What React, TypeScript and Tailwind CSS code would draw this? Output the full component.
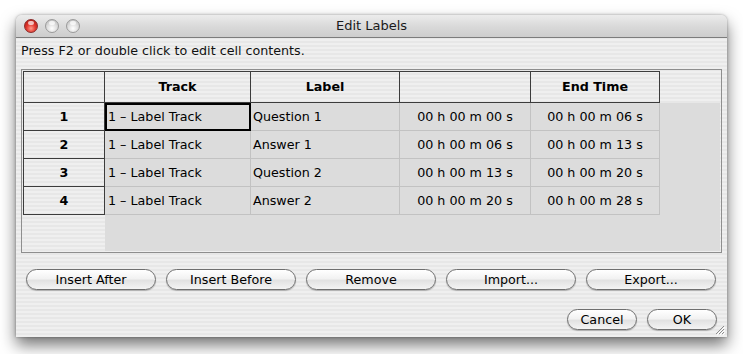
import React from 'react'

const rows = [
  { n: '1', track: '1 – Label Track', label: 'Question 1', start: '00 h 00 m 00 s', end: '00 h 00 m 06 s' },
  { n: '2', track: '1 – Label Track', label: 'Answer 1', start: '00 h 00 m 06 s', end: '00 h 00 m 13 s' },
  { n: '3', track: '1 – Label Track', label: 'Question 2', start: '00 h 00 m 13 s', end: '00 h 00 m 20 s' },
  { n: '4', track: '1 – Label Track', label: 'Answer 2', start: '00 h 00 m 20 s', end: '00 h 00 m 28 s' },
]

const stripes =
  'bg-[#ececec] bg-[image:repeating-linear-gradient(180deg,#efefef_0px,#efefef_2px,#e7e7e7_2px,#e7e7e7_4px)]'

function Light({ red }: { red?: boolean }) {
  return (
    <span
      className={
        red
          ? 'w-[14px] h-[14px] rounded-full border border-[#8a2a2a] bg-[radial-gradient(circle_at_50%_70%,#ff9a8a_0%,#e0352c_45%,#a3160f_100%)] relative'
          : 'w-[14px] h-[14px] rounded-full border border-[#9a9a9a] bg-[radial-gradient(circle_at_50%_70%,#ffffff_0%,#dcdcdc_50%,#b4b4b4_100%)] relative'
      }
    >
      <span className="absolute left-[3px] top-[1px] w-[6px] h-[4px] rounded-full bg-white/70" />
    </span>
  )
}

function AquaButton({ children, w }: { children: React.ReactNode; w: string }) {
  return (
    <button
      className={`${w} h-[21px] rounded-full border border-[#6f6f6f] bg-[linear-gradient(180deg,#ffffff_0%,#f2f2f2_45%,#e2e2e2_55%,#f4f4f4_100%)] shadow-[0_1px_1px_rgba(0,0,0,0.25)] text-[12.7px] leading-[19px] text-black text-center`}
    >
      {children}
    </button>
  )
}

export default function App() {
  return (
    <div className="w-[743px] h-[354px] bg-white pt-[15px] pl-[16px] font-['DejaVu_Sans',sans-serif] text-[12.7px] text-black">
      <div className={`w-[711px] h-[322px] rounded-t-[6px] shadow-[0_8px_16px_rgba(0,0,0,0.55),0_0_3px_rgba(0,0,0,0.35)] flex flex-col overflow-hidden relative ${stripes}`}>
        {/* title bar */}
        <div className="h-[23px] shrink-0 flex items-center bg-[linear-gradient(180deg,#ececec_0%,#dadada_50%,#cdcdcd_100%)] border-b border-[#7c7c7c] relative">
          <div className="flex gap-[7px] pl-[8px]">
            <Light red />
            <Light />
            <Light />
          </div>
          <span className="absolute inset-x-0 text-center text-[13px] text-[#1a1a1a]">Edit Labels</span>
        </div>

        <div className="px-[5px] flex flex-col">
          <p className="h-[31px] pt-[5px] leading-[16px] text-[#111]">Press F2 or double click to edit cell contents.</p>

          {/* table */}
          <div className="w-[701px] h-[184px] border border-[#8e8e8e] p-[1px] flex flex-col">
            <div className="flex h-[32px] shrink-0">
              <div className="w-[82px] border border-[#3c3c3c]" />
              <div className="w-[146px] border-y border-r border-[#3c3c3c] flex items-center justify-center font-bold">Track</div>
              <div className="w-[149px] border-y border-r border-[#3c3c3c] flex items-center justify-center font-bold">Label</div>
              <div className="w-[131px] border-y border-r border-[#3c3c3c]" />
              <div className="w-[129px] border-y border-r border-[#3c3c3c] flex items-center justify-center font-bold">End Time</div>
              <div className="flex-1" />
            </div>
            <div className="flex flex-1">
              <div className="w-[82px] flex flex-col">
                {rows.map((r) => (
                  <div key={r.n} className="h-[28px] border-x border-b border-[#3c3c3c] flex items-center justify-center font-bold">
                    {r.n}
                  </div>
                ))}
              </div>
              <div className="flex-1 bg-[#dcdcdc] flex flex-col">
                {rows.map((r, i) => (
                  <div key={r.n} className="flex h-[28px]">
                    <div
                      className={
                        i === 0
                          ? 'w-[146px] border-2 border-black pl-[1px] flex items-center'
                          : 'w-[146px] border-r border-b border-[#c2c2c2] pl-[3px] flex items-center'
                      }
                    >
                      {r.track}
                    </div>
                    <div className="w-[149px] border-r border-b border-[#c2c2c2] pl-[2px] flex items-center">{r.label}</div>
                    <div className="w-[131px] border-r border-b border-[#c2c2c2] flex items-center justify-center">{r.start}</div>
                    <div className="w-[129px] border-r border-b border-[#c2c2c2] flex items-center justify-center">{r.end}</div>
                  </div>
                ))}
              </div>
            </div>
          </div>

          {/* action buttons */}
          <div className="flex gap-[10px] pl-[5px] mt-[16px]">
            <AquaButton w="w-[130px]">Insert After</AquaButton>
            <AquaButton w="w-[130px]">Insert Before</AquaButton>
            <AquaButton w="w-[130px]">Remove</AquaButton>
            <AquaButton w="w-[130px]">Import...</AquaButton>
            <AquaButton w="w-[130px]">Export...</AquaButton>
          </div>

          <div className="flex justify-end gap-[10px] pr-[5px] mt-[19px]">
            <AquaButton w="w-[70px]">Cancel</AquaButton>
            <AquaButton w="w-[70px]">OK</AquaButton>
          </div>
        </div>

        {/* resize grip */}
        <svg className="absolute right-[2px] bottom-[2px]" width="11" height="11" viewBox="0 0 11 11">
          <path d="M10 2 L2 10 M10 5 L5 10 M10 8 L8 10" stroke="#8c8c8c" strokeWidth="1" />
          <path d="M11 3 L3 11 M11 6 L6 11 M11 9 L9 11" stroke="#ffffff" strokeWidth="1" />
        </svg>
      </div>
    </div>
  )
}
